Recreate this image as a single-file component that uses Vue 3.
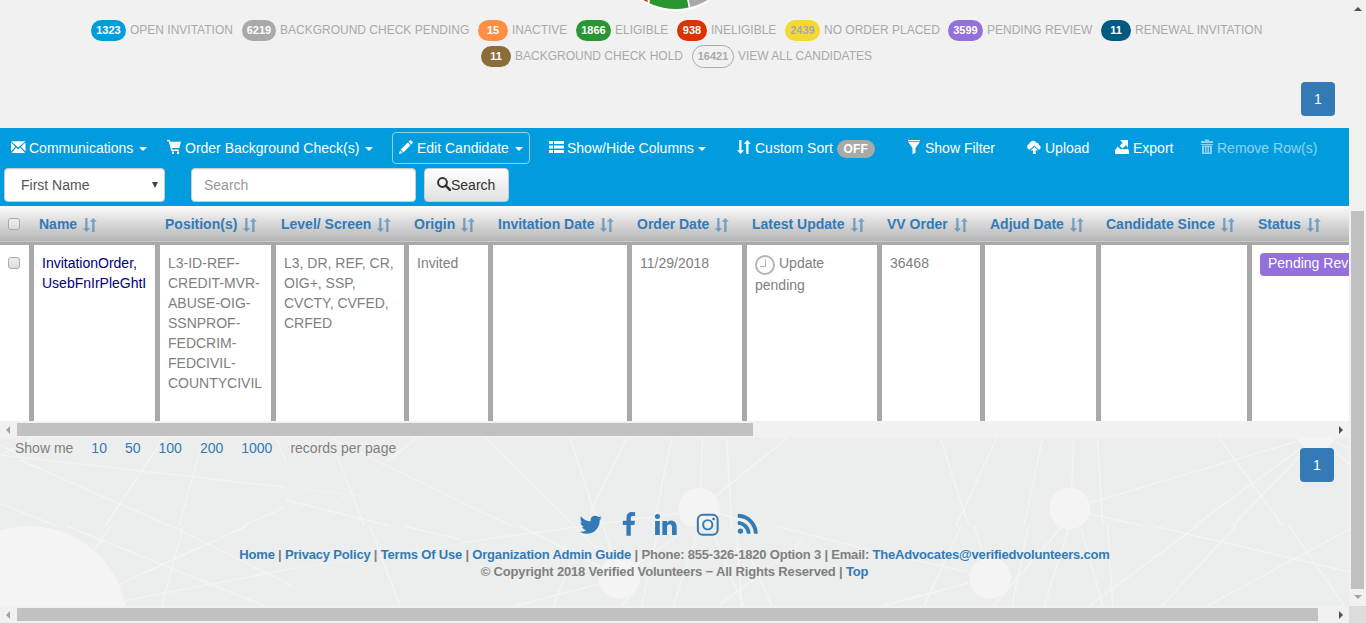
<script setup>
const legendRows = [
  [
    { n: '1323', label: 'OPEN INVITATION', bg: '#019cde', w: 35, gap: 4, item: 151 },
    { n: '6219', label: 'BACKGROUND CHECK PENDING', bg: '#a9a9a9', w: 34, gap: 4, item: 236 },
    { n: '15', label: 'INACTIVE', bg: '#ff8f43', w: 30, gap: 4, item: 98 },
    { n: '1866', label: 'ELIGIBLE', bg: '#2a9632', w: 35, gap: 4, item: 101 },
    { n: '938', label: 'INELIGIBLE', bg: '#dc3200', w: 30, gap: 4, item: 108 },
    { n: '2439', label: 'NO ORDER PLACED', bg: '#f6d833', fg: '#a9a9a9', w: 35, gap: 4, item: 163 },
    { n: '3599', label: 'PENDING REVIEW', bg: '#9370db', w: 35, gap: 4, item: 153 },
    { n: '11', label: 'RENEWAL INVITATION', bg: '#015a82', w: 30, gap: 4, item: 162 },
  ],
  [
    { n: '11', label: 'BACKGROUND CHECK HOLD', bg: '#8b6c3b', w: 30, gap: 4, item: 211 },
    { n: '16421', label: 'VIEW ALL CANDIDATES', bg: 'transparent', fg: '#a9a9a9', w: 42, gap: 4, item: 182, outline: true },
  ],
]

const tools = [
  { icon: 'mail', label: 'Communications', caret: true, w: 156, gap: 4 },
  { icon: 'cart', label: 'Order Background Check(s)', caret: true, w: 226, gap: 4 },
  { icon: 'pencil', label: 'Edit Candidate', caret: true, w: 156, gap: 4, boxed: true },
  { icon: 'list', label: 'Show/Hide Columns', caret: true, w: 188, gap: 4 },
  { icon: 'sort', label: 'Custom Sort', badge: 'OFF', w: 170, gap: 4 },
  { icon: 'filter', label: 'Show Filter', w: 120, gap: 4 },
  { icon: 'cloud', label: 'Upload', w: 88, gap: 4 },
  { icon: 'export', label: 'Export', w: 85, gap: 4 },
  { icon: 'trash', label: 'Remove Row(s)', w: 130, gap: 3, dim: true },
]

const icons = {
  mail: 'M0 1.2h14.500L7.200 7.600zM0 2.600l4.300 4.200L0 11.600zM14.500 2.600v9L9.900 6.800zM5.100 7.500 7.200 9.400l2.100-1.900 4.700 5.500H.6z',
  cart: 'M0 0h2.600l.7 1.700H14l-1.700 6.400H5l.4 1.400h6.400V11H4.300L1.700 1.300H0zM5 11.400h2V14H5zM10 11.400h2V14h-2z',
  pencil: 'M10.800.4q.7-.6 1.300 0l1.500 1.500q.6.7 0 1.300l-1.300 1.300-2.800-2.800zM8.800 2.400l2.800 2.800-7.200 7.200-2.800-2.800zM1 10.400 3.600 13 0 14z',
  list: 'M0 1h4v3H0zM5 1h10v3H5zM0 5.500h4v3H0zM5 5.500h10v3H5zM0 10h4v3H0zM5 10h10v3H5z',
  sort: 'M2.200 0h2.300v10.300H7L3.500 14 0 10.300h2.200zM10.300 0 13.800 3.700h-2.300V14H9.200V3.700H6.800z',
  filter: 'M1 0h12v1.300H1zM1.200 2h11.600L8.500 8v5L5.500 14V8z',
  cloud: 'M2.800 9.700A2.900 2.900 0 0 1 2.200 4 3.900 3.900 0 0 1 9.200 2.500a3 3 0 0 1 2.900 2.600 2.400 2.400 0 0 1-.3 4.600L7.300 5.500zM7.300 6.800 11 10.500H8.700V14H6v-3.500H3.600z',
  export: 'M5 0h8v7.500l-2.200-2.200-3.300 3.300-2.800-2.600 3-3.200zM2.500 6.500 5.500 9.300h6.300L12.500 8.300 14 10.500V14H0v-3.500z',
  trash: 'M5-.5h4v1.500h4v2H1V1h4zM1 4h12v1H1zM2 5.500h10V14H2zM4 7v5.500h1V7zM6.500 7v5.500h1V7zM9 7v5.500h1V7z',
}

const cols = [
  { title: '', w: 29, check: true },
  { title: 'Name', w: 126, text: ['InvitationOrder,', 'UsebFnIrPleGhtI'], link: true },
  { title: 'Position(s)', w: 116, text: ['L3-ID-REF-', 'CREDIT-MVR-', 'ABUSE-OIG-', 'SSNPROF-', 'FEDCRIM-', 'FEDCIVIL-', 'COUNTYCIVIL'] },
  { title: 'Level/ Screen', w: 133, text: ['L3, DR, REF, CR,', 'OIG+, SSP,', 'CVCTY, CVFED,', 'CRFED'] },
  { title: 'Origin', w: 84, text: ['Invited'] },
  { title: 'Invitation Date', w: 139, text: [] },
  { title: 'Order Date', w: 115, text: ['11/29/2018'] },
  { title: 'Latest Update', w: 135, clock: true },
  { title: 'VV Order', w: 103, text: ['36468'] },
  { title: 'Adjud Date', w: 116, text: [] },
  { title: 'Candidate Since', w: 151, text: [] },
  { title: 'Status', w: 102, status: 'Pending Rev' },
]

const social = [
  { name: 'twitter', d: 'M1684 408q-67 98-162 167 1 14 1 42 0 130-38 259.5t-115.5 248.5-184.5 210.5-258 146-323 54.5q-271 0-496-145 35 4 78 4 225 0 401-138-105-2-188-64.5t-114-159.5q33 5 61 5 43 0 85-11-112-23-185.5-111.5t-73.5-205.5v-4q68 38 146 41-66-44-105-115t-39-154q0-88 44-163 121 149 294.5 238.5t371.5 99.5q-8-38-8-74 0-134 94.5-228.5t228.5-94.5q140 0 236 102 109-21 205-78-37 115-142 178 93-10 186-50z' },
  { name: 'facebook', d: 'M1343 12v264h-157q-86 0-116 36t-30 108v189h293l-39 296h-254v759h-306v-759h-255v-296h255v-218q0-186 104-288.5t277-102.5q147 0 228 12z' },
  { name: 'linkedin', d: 'M477 625v991h-330v-991h330zm21-306q1 73-50.5 122t-135.5 49h-2q-82 0-132-49t-50-122q0-74 51.5-122.5t134.5-48.5 133 48.5 51 122.5zm1166 729v568h-329v-530q0-105-40.5-164.5t-126.5-59.5q-63 0-105.5 34.5t-63.5 85.5q-11 30-11 81v553h-329q2-399 2-647t-1-296l-1-48h329v144h-2q20-32 41-56t56.5-52 87-43.5 114.5-15.5q171 0 275 113.5t104 332.5z' },
  { name: 'instagram' },
  { name: 'rss', d: 'M576 1344q0 80-56 136t-136 56-136-56-56-136 56-136 136-56 136 56 56 136zm512 123q2 28-17 48-18 21-47 21h-135q-25 0-43-16.5t-20-41.5q-22-229-184.5-391.5t-391.5-184.5q-25-2-41.5-20t-16.5-43v-135q0-29 21-47 17-17 43-17h5q160 13 306 80.5t259 181.5q114 113 181.5 259t80.5 306zm512 2q2 27-18 47-18 20-46 20h-143q-26 0-44.5-17.5t-19.5-42.5q-12-215-101-408.5t-231.5-336-336-231.5-408.5-102q-25-1-42.5-19.5t-17.5-43.5v-143q0-28 20-46 18-18 44-18h3q262 13 501.5 120t425.5 294q187 186 294 425.5t120 501.5z' },
]
</script>

<template>
  <div class="window">
    <div class="main">
      <div class="page">
        <section class="summary">
          <svg class="donut" width="140" height="12" viewBox="605 0 140 12">
            <defs><clipPath id="ring"><circle cx="675.5" cy="-53" r="62" /></clipPath></defs>
            <circle cx="675.5" cy="-53" r="64" fill="#fff" />
            <g clip-path="url(#ring)">
              <path d="M600 -20h46.5l2 40h-60z" fill="#dc3200" />
              <path d="M651 -5 647.5 12h42L685.600 -8z" fill="#2a9632" />
              <path d="M686.8 -8 691.500 12h60v-20z" fill="#a9a9a9" />
            </g>
          </svg>
          <div v-for="(row, r) in legendRows" :key="r" class="legend" :class="'legend-' + r">
            <div v-for="l in row" :key="l.label" class="legend-item" :style="{ width: l.item + 'px' }">
              <span class="pill" :class="{ outline: l.outline }" :style="{ width: l.w + 'px', background: l.bg, color: l.fg || '#fff' }">{{ l.n }}</span>
              <span class="legend-label" :style="{ marginLeft: l.gap + 'px' }">{{ l.label }}</span>
            </div>
          </div>
          <a class="page-btn">1</a>
        </section>

        <section class="toolbar">
          <div class="tools">
            <div v-for="t in tools" :key="t.label" class="tool-slot" :style="{ width: t.w + 'px' }">
              <a class="tool" :class="[t.icon, { boxed: t.boxed, dim: t.dim }]" :style="{ columnGap: t.gap + 'px' }">
                <svg class="tool-icon" width="14" height="14" viewBox="0 0 14 14"><path :d="icons[t.icon]" fill-rule="evenodd" /></svg>
                <span class="tool-text">
                  <span>{{ t.label }}</span>
                  <i v-if="t.caret" class="caret" :class="{ near: t.icon === 'list' }"></i>
                  <b v-if="t.badge" class="off">{{ t.badge }}</b>
                </span>
              </a>
            </div>
          </div>
          <div class="searchbar">
            <div class="select"><span>First Name</span><i></i></div>
            <div class="input">Search</div>
            <button class="search-btn">
              <svg width="14" height="14" viewBox="0 0 14 14"><circle cx="5.500" cy="5.500" r="4.400" fill="none" stroke="#333" stroke-width="2" /><path d="m8.700 8.700 4.200 4.200" stroke="#333" stroke-width="2.500" stroke-linecap="round" /></svg>
              <span>Search</span>
            </button>
          </div>
        </section>

        <section class="grid">
          <div class="thead">
            <div v-for="(c, i) in cols" :key="i" class="th" :style="{ width: c.w + 'px' }">
              <i v-if="c.check" class="box"></i>
              <template v-else>
                <span>{{ c.title }}</span>
                <svg width="14" height="14" viewBox="0 0 14 14"><path :d="icons.sort" /></svg>
              </template>
            </div>
          </div>
          <div class="tbody">
            <div v-for="(c, i) in cols" :key="i" class="td" :class="{ first: c.check, link: c.link }" :style="{ width: c.w + 'px' }">
              <i v-if="c.check" class="box"></i>
              <div v-for="line in c.text" :key="line">{{ line }}</div>
              <template v-if="c.clock">
                <div class="clock-line">
                  <svg width="20" height="20" viewBox="0 0 20 20" fill="none"><circle cx="10" cy="10" r="9" stroke="#b5b5b5" stroke-width="2" /><path d="M10.500 4v7.500H5" stroke="#b5b5b5" /></svg>
                  <span>Update</span>
                </div>
                <div>pending</div>
              </template>
              <span v-if="c.status" class="status">{{ c.status }}</span>
            </div>
          </div>
          <div class="hbar">
            <i class="arrow left"></i><i class="thumb inner"></i><i class="arrow right"></i>
          </div>
        </section>

        <footer class="footer">
          <svg class="network" width="1349" height="168" viewBox="0 0 1349 168" fill="none" stroke="#f3f4f4" stroke-width="4.500">
            <g transform="translate(0 -8) scale(.33333)">
              <circle cx="88" cy="581" r="293" fill="#f4f4f4" stroke="none" />
              <path d="M0 75 858 172M60 90 510 288M490 25 315 288M610 25 537 288M0 220 170 288M830 25 858 98M858 230 730 288M200 288 795 528M330 288 285 360M550 288 485 528M515 288 875 467M740 288 360 462M375 512 880 415M1250 25 1160 95M858 210 1170 288M1212 288 1380 328M995 25 1380 215M1010 75 1093 288M1110 288 1200 528M0 45 60 75M0 75 100 25" />
              <path d="M880 415 1380 342M1160 95 925 288M858 210 1010 75M940 288 880 335M910 178 1110 200" stroke-width="2" />
            </g>
            <g transform="translate(460 -8) scale(.33333)">
              <path d="M655 236a62 62 0 0 1 124 0q0 34-27 52h-70q-27-18-27-52z" fill="#f4f4f4" stroke="none" />
              <circle cx="478" cy="443" r="62" fill="#f4f4f4" stroke="none" />
              <path d="M78 25 345 288M330 25 400 240 425 288M498 25 390 250M635 25 580 288M728 25 722 175M800 25 815 288M980 25 765 200M0 215 155 288M180 288 420 410M0 338 655 250M775 250 905 288M945 288 1230 360M165 528 425 460M430 290 460 385M345 288 440 390M660 312 520 410M590 320 545 528M712 310 640 528M760 310 850 528M830 310 845 528M870 380 935 528M1030 330 775 528M1380 495 1270 528M330 400 280 528M530 475 485 528" />
            </g>
            <g transform="translate(906 -38) scale(.33333)">
              <circle cx="491" cy="325" r="62" fill="#f4f4f4" stroke="none" />
              <circle cx="252" cy="533" r="62" fill="#f4f4f4" stroke="none" />
              <circle cx="1230" cy="90" r="62" fill="#f4f4f4" stroke="none" />
              <path d="M103 115 188 377M272 115 150 377M410 115 354 377M503 115 497 263M574 115 590 377M940 115 1130 377M1170 125 553 308M1180 148 865 377M1190 160 980 377M553 342 710 377M740 377 1329 515M1290 128 1329 145M1285 155 1329 190M205 377 235 475M165 377 55 617M368 377 318 617M470 377 262 617M488 385 415 617M525 385 590 617M605 377 620 617M875 377 550 617M990 377 768 617M1148 377 1315 617M1329 388 905 617M0 600 190 548M0 475 190 517" />
            </g>
          </svg>
          <div class="records">
            <div class="sizes">
              <span class="show">Show me</span>
              <a>10</a><a>50</a><a>100</a><a>200</a><a>1000</a>
              <span>records per page</span>
            </div>
            <a class="page-btn">1</a>
          </div>
          <div class="social">
            <svg v-for="s in social" :key="s.name" :class="s.name" width="25.500" height="25.500" viewBox="0 0 1792 1792">
              <path v-if="s.d" :d="s.d" />
              <g v-else>
                <rect x="200" y="200" width="1392" height="1392" rx="350" fill="none" stroke="#337ab7" stroke-width="144" />
                <circle cx="896" cy="896" r="325" fill="none" stroke="#337ab7" stroke-width="140" />
                <circle cx="1306" cy="486" r="92" />
              </g>
            </svg>
          </div>
          <div class="legal">
            <div class="links"><a>Home</a> | <a>Privacy Policy</a> | <a>Terms Of Use</a> | <a>Organization Admin Guide</a> | Phone: 855-326-1820 Option 3 | Email: <a>TheAdvocates@verifiedvolunteers.com</a></div>
            <div class="copy">© Copyright 2018 Verified Volunteers − All Rights Reserved | <a>Top</a></div>
          </div>
        </footer>
      </div>
      <div class="vbar"><i class="arrow up"></i><i class="vthumb"></i><i class="arrow down"></i></div>
    </div>
    <div class="bottom">
      <div class="hbar outer"><i class="arrow left"></i><i class="thumb whole"></i><i class="arrow right"></i></div>
      <div class="corner"></div>
    </div>
  </div>
</template>

<style>
body { margin: 0; overflow: hidden; }
</style>

<style scoped>
* { box-sizing: border-box; }
.window { width: 1366px; height: 623px; overflow: hidden; background: #f1f1f1; font: 14px/20px "Liberation Sans", Arial, sans-serif; color: #808080; }
.main { display: flex; height: 606px; }
.page { width: 1349px; height: 606px; overflow: hidden; }
svg { display: block; flex: none; }
a { color: #337ab7; }
.summary { height: 128px; position: relative; padding-top: 20px; }
.donut { position: absolute; left: 605px; top: 0; }
.legend { display: flex; height: 21px; }
.legend-0 { padding-left: 91px; }
.legend-1 { padding-left: 481px; margin-top: 5px; }
.legend-item { display: flex; flex: none; height: 21px; align-items: center; white-space: nowrap; }
.pill { flex: none; height: 21px; border-radius: 10.5px; font-size: 11px; font-weight: bold; line-height: 21px; text-align: center; }
.pill.outline { height: 23px; border: 1px solid #a9a9a9; border-radius: 11.5px; }
.legend-label { font-size: 12px; line-height: 21px; height: 21px; color: #a9a9a9; }
.page-btn { display: block; width: 34px; height: 34px; border-radius: 4px; background: #337ab7; color: #fff; text-align: center; line-height: 34px; }
.summary .page-btn { margin: 15px 0 0 1301px; }
.toolbar { height: 78px; background: #019cde; }
.tools { display: flex; height: 40px; padding: 4px 0 0 10px; }
.tool-slot { flex: none; }
.tool { display: inline-flex; align-items: center; height: 32px; color: #fff; white-space: nowrap; }
.tool-text { display: flex; align-items: center; }
.tool-icon { margin: -2px 0 0 1px; fill: #fff; overflow: visible; }
.sort .tool-icon { margin-left: 0; }
.sort { padding-left: 1px; }
.tool.boxed { width: 138px; border: 1px solid #8fd3f1; border-radius: 4px; padding-left: 5px; }
.dim { opacity: .55; }
.caret { border: 4px solid transparent; border-top-color: #fff; border-bottom: 0; margin: 2px 0 0 6px; }
.caret.near { margin-left: 4px; }
.off { width: 38px; height: 18px; margin: 1px 0 0 4px; border-radius: 9px; background: #a9a9a9; font-size: 12px; line-height: 18px; text-align: center; letter-spacing: .2px; }
.searchbar { display: flex; padding-left: 4px; }
.select, .input { height: 34px; background: #fff; border: 1px solid #ccc; border-radius: 4px; line-height: 32px; box-shadow: inset 0 1px 1px rgba(0,0,0,.075); }
.select { width: 161px; display: flex; justify-content: space-between; align-items: center; padding: 0 6px 0 16px; color: #555; }
.select i { border: 3.5px solid transparent; border-top: 6px solid #444; border-bottom: 0; }
.input { width: 225px; margin-left: 26px; padding-left: 12px; color: #999; }
.search-btn { display: flex; align-items: center; width: 85px; height: 34px; margin: 0 0 0 8px; padding: 0 0 0 12px; border: 1px solid #ccc; border-radius: 4px; background: linear-gradient(#fff, #e0e0e0); font: inherit; color: #333; }
.search-btn svg { margin-top: -2px; }
.grid { height: 232px; }
.thead { display: flex; height: 39px; background: linear-gradient(#fcfcfc 0, #b5b5b5 35px, #c9c9c9 35px, #c9c9c9 36px, #a9a9a9 36px); }
.th { flex: none; display: flex; align-items: center; height: 36px; padding-left: 10px; font-weight: bold; color: #337ab7; white-space: nowrap; }
.th:first-child { padding-left: 8px; }
.th:last-child { padding-left: 11px; }
.th svg { margin: 1px 0 0 6px; fill: #337ab7; opacity: .6; }
.box { display: block; width: 12px; height: 12px; border: 1px solid #aaa; border-radius: 3px; background: linear-gradient(#eee, #ddd); }
.tbody { display: flex; height: 176px; background: #fff; overflow: hidden; }
.td { flex: none; border-left: 5px solid #a9a9a9; padding: 8px 0 0 8px; white-space: nowrap; }
.td.first { border: 0; padding-top: 12px; }
.td.link { color: #000080; }
.clock-line { display: flex; height: 22px; }
.clock-line svg { margin: 2px 4px 0 0; }
.status { display: block; height: 23px; border-radius: 4px 0 0 4px; background: #9370db; color: #fff; padding-left: 8px; line-height: 21px; }
.hbar { position: relative; display: flex; align-items: center; height: 17px; background: #f1f1f1; }
.arrow { flex: none; width: 0; height: 0; border: 4px solid transparent; }
.left { margin-left: 6px; border-left: 0; border-right-color: #a3a3a3; }
.right { margin-left: auto; margin-right: 6px; border-right: 0; border-left-color: #505050; }
.thumb { height: 13px; margin-left: 7px; background: #c1c1c1; }
.inner { width: 736px; }
.whole { width: 1301px; }
.footer { position: relative; height: 168px; background: #eceeee; }
.network { position: absolute; left: 0; top: 0; }
.records { position: relative; display: flex; justify-content: space-between; height: 44px; padding-right: 15px; }
.sizes { display: flex; gap: 18px; padding-left: 15px; }
.records .page-btn { margin-top: 10px; }
.social { position: relative; display: flex; margin: 29.700px 0 0 578px; fill: #337ab7; }
.facebook, .linkedin { margin-left: 12.200px; }
.instagram { margin-left: 16px; }
.rss { margin-left: 14.600px; }
.legal { position: relative; margin-top: 8.700px; font-size: 13px; font-weight: bold; line-height: 17px; text-align: center; white-space: nowrap; }
.links { letter-spacing: -.193px; }
.copy { letter-spacing: -.17px; }
.vbar { width: 17px; background: #f1f1f1; display: flex; flex-direction: column; align-items: center; }
.vthumb { width: 13px; height: 378px; background: #c1c1c1; margin-top: 200px; }
.up { margin-top: 7px; border-top: 0; border-bottom-color: #505050; }
.down { margin-top: 6px; border-bottom: 0; border-top-color: #a3a3a3; }
.bottom { display: flex; }
.outer { width: 1349px; }
.corner { width: 17px; height: 17px; background: #dcdcdc; }
</style>
